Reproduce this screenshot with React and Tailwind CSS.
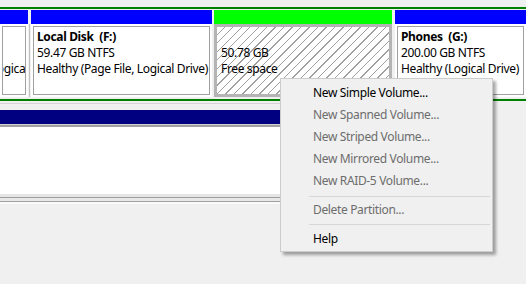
const font = "font-['Noto_Sans',sans-serif] text-[12px] leading-[16px] tracking-[-0.35px]";

const menuItems = [
  { label: 'New Simple Volume...', enabled: true },
  { label: 'New Spanned Volume...' },
  { label: 'New Striped Volume...' },
  { label: 'New Mirrored Volume...' },
  { label: 'New RAID-5 Volume...' },
  { sep: true, top: 'pt-[4px] pb-[2px]' },
  { label: 'Delete Partition...' },
  { sep: true, top: 'pt-[3px] pb-[3px]' },
  { label: 'Help', enabled: true },
];

const Volume = ({ width, header, children, className = '' }) => (
  <div className={`flex flex-col shrink-0 overflow-hidden ${width} ${className}`}>
    <div className={`h-[14px] shrink-0 ${header}`} />
    {children}
  </div>
);

const VolumeBody = ({ lines, name, shift = '' }) => (
  <div className="h-[73px] bg-white p-[2px]">
    <div className="h-full border border-[#a0a0a0] pl-[3px] pt-[2px] overflow-hidden">
      <div className={`whitespace-pre text-black ${font} ${shift}`}>
        <div className="font-bold">{name || '\u00a0'}</div>
        {lines.map((l, i) => (
          <div key={i}>{l}</div>
        ))}
      </div>
    </div>
  </div>
);

export default function App() {
  return (
    <div className="relative w-[526px] h-[284px] overflow-hidden bg-[#f0f0f0]">
      {/* extended partition disk row */}
      <div className="h-[7px]" />
      <div className="h-[2px] bg-[#008000]" />
      <div className="h-px" />
      <div className="flex h-[87px]">
        <Volume width="w-[28px]" header="bg-[#0000ff]">
          <VolumeBody name="" lines={['\u00a0', 'Healthy (Logical Drive)']} shift="-ml-[62px]" />
        </Volume>
        <div className="w-[3px] shrink-0 flex justify-center">
          <div className="w-px mt-[14px] bg-[#c0c0c0]" />
        </div>
        <Volume width="w-[181px]" header="bg-[#0000ff]">
          <VolumeBody name="Local Disk  (F:)" lines={['59.47 GB NTFS', 'Healthy (Page File, Logical Drive)']} />
        </Volume>
        <div className="w-[2px] shrink-0" />
        <Volume width="w-[178px]" header="bg-[#00ff00]">
          <div className="h-[73px] border-[3px] border-[#b4b4b4] bg-white bg-[repeating-linear-gradient(135deg,transparent_0,transparent_5px,#a0a0a0_5px,#a0a0a0_6px)] pl-[4px] pt-[2px]">
            <div className={`text-black ${font}`}>
              <div>{'\u00a0'}</div>
              <div>50.78 GB</div>
              <div>Free space</div>
            </div>
          </div>
        </Volume>
        <div className="w-[3px] shrink-0" />
        <Volume width="w-[131px]" header="bg-[#0000ff]">
          <VolumeBody name="Phones  (G:)" lines={['200.00 GB NTFS', 'Healthy (Logical Drive)']} />
        </Volume>
      </div>
      <div className="h-[2px]" />
      <div className="h-[2px] bg-[#008000]" />

      {/* next disk row */}
      <div className="h-[2px]" />
      <div className="h-px bg-[#d4d4d4] w-[300px]" />
      <div className="h-[6px]" />
      <div className="w-[300px] flex flex-col">
        <div className="h-[14px] bg-[#000080]" />
        <div className="h-px bg-[#d0d0d0]" />
        <div className="h-[2px] bg-[#a0a0a0]" />
        <div className="h-[67px] bg-white" />
        <div className="h-[3px] bg-[#e6e6e6]" />
        <div className="h-px bg-[#a0a0a0]" />
        <div className="h-[3px] bg-[#e8e8e8]" />
        <div className="h-px bg-[#a0a0a0]" />
        <div className="h-[2px] bg-[#fafafa]" />
      </div>

      {/* context menu */}
      <div className="absolute left-[280px] top-[78px] w-[213px] bg-[#f0f0f0] border border-[#cccccc] shadow-[3px_3px_3px_rgba(0,0,0,0.35)] pt-[3px] pb-px">
        {menuItems.map((item, i) =>
          item.sep ? (
            <div key={i} className={`pl-[28px] pr-[2px] ${item.top}`}>
              <div className="h-px bg-[#d7d7d7]" />
            </div>
          ) : (
            <div
              key={i}
              className={`h-[22px] flex items-center pl-[32px] ${font} ${item.enabled ? 'text-black' : 'text-[#6d6d6d]'}`}
            >
              {item.label}
            </div>
          )
        )}
      </div>
    </div>
  );
}
